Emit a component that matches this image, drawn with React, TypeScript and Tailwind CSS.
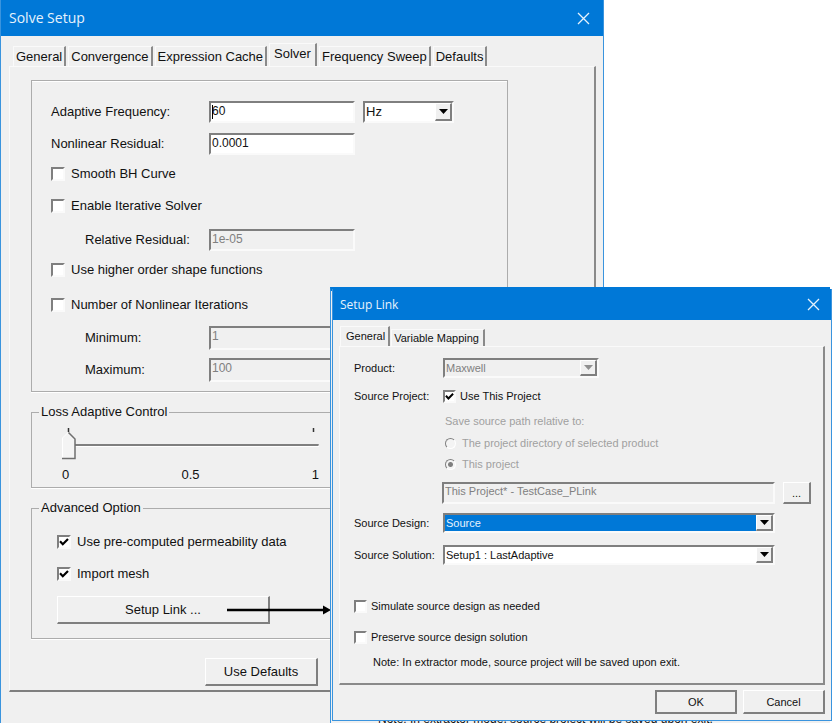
import React from "react";

const sunken =
  "border-2 border-t-[#7f7f7f] border-l-[#7f7f7f] border-r-[#fafafa] border-b-[#fafafa]";
const raised =
  "border-t border-l border-r-2 border-b-2 border-t-white border-l-white border-r-[#7f7f7f] border-b-[#7f7f7f]";

const TitleBar = ({ title, className }: { title: string; className: string }) => (
  <header className={`flex items-center justify-between bg-[#0078d7] text-white ${className}`}>
    <h1 className="font-['Open_Sans',sans-serif] leading-4 text-[#e6f2fc]">{title}</h1>
    <button type="button" aria-label="Close">
      <svg width="13" height="13" viewBox="0 0 13 13" stroke="#e6f2fc" strokeWidth="1.3">
        <path d="M1 1 12 12M12 1 1 12" />
      </svg>
    </button>
  </header>
);

const Tabs = ({
  tabs,
  active,
  small,
}: {
  tabs: string[];
  active: string;
  small?: boolean;
}) => {
  const idleSize = small ? "h-[17px] pl-[2px] pr-1" : "h-5 px-[2px]";
  const activeSize = small ? "h-5 pb-[2px] pl-[5px] pr-[3px]" : "h-[23px] pb-[2px] px-1";

  return (
    <div role="tablist" className={`flex items-end ${small ? "gap-px" : "gap-[2px]"}`}>
      {tabs.map((tab) => (
        <button
          key={tab}
          type="button"
          role="tab"
          aria-selected={tab === active}
          className={`border-t border-l border-t-[#fafafa] border-l-[#fafafa] border-r-2 border-r-[#8a8a8a] whitespace-nowrap ${
            tab === active ? activeSize : idleSize
          }`}
        >
          {tab}
        </button>
      ))}
    </div>
  );
};

const Check = ({
  label,
  checked,
  small,
}: {
  label: string;
  checked?: boolean;
  small?: boolean;
}) => (
  <label className={`flex items-center ${small ? "gap-1" : "gap-[6px]"}`}>
    <span className={`grid shrink-0 bg-white ${sunken} ${small ? "size-[13px]" : "size-[14px]"}`}>
      <input
        type="checkbox"
        defaultChecked={checked}
        className="peer col-start-1 row-start-1 size-full appearance-none"
      />
      <svg
        viewBox="0 0 10 10"
        className="pointer-events-none invisible col-start-1 row-start-1 size-full peer-checked:visible"
        fill="none"
        stroke="#000"
        strokeWidth="2.2"
      >
        <path d="M1 4.2 3.8 7.2 9 2" />
      </svg>
    </span>
    {label}
  </label>
);

const Combo = ({
  id,
  label,
  value,
  className,
  disabled,
  highlight,
}: {
  id: string;
  label?: string;
  value: string;
  className: string;
  disabled?: boolean;
  highlight?: boolean;
}) => (
  <div className={`flex ${sunken} ${disabled ? "" : "bg-white"} ${className}`}>
    <select
      id={id}
      aria-label={label}
      disabled={disabled}
      className={`min-w-0 flex-1 appearance-none pl-px opacity-100 ${
        disabled ? "text-[#808080]" : ""
      } ${highlight ? "bg-[#0078d7] text-[#e6f2fc]" : ""}`}
    >
      <option>{value}</option>
    </select>
    <span className={`flex w-[17px] items-center justify-center bg-[#f0f0f0] ${raised}`}>
      <svg width="9" height="5" viewBox="0 0 9 5" fill={disabled ? "#909090" : "#000"}>
        <path d="M0 0h9L4.500 5z" />
      </svg>
    </span>
  </div>
);

const Field = ({
  id,
  label,
  value,
  disabled,
  indent,
  tall,
  row,
}: {
  id: string;
  label: string;
  value: string;
  disabled?: boolean;
  indent?: boolean;
  tall?: boolean;
  row: string;
}) => (
  <div className={`flex items-center ${row}`}>
    <label htmlFor={id} className={`w-[158px] ${indent ? "pl-[34px]" : ""}`}>
      {label}
    </label>
    <div className="relative flex w-[146px]">
      <input
        id={id}
        defaultValue={value}
        disabled={disabled}
        className={`w-full pl-px text-[12px] leading-4 ${sunken} ${
          tall ? "h-6 pb-[5px]" : "h-[22px] pb-[2px]"
        } ${disabled ? "text-[#808080]" : "bg-white"}`}
      />
      {id === "frequency" && <span className="absolute top-1 left-[3px] h-[14px] w-px bg-black" />}
    </div>
    {id === "frequency" && (
      <Combo id="unit" label="Frequency unit" value="Hz" className="ml-2 h-[22px] w-[91px]" />
    )}
  </div>
);

const Group = ({
  title,
  className,
  children,
}: {
  title: string;
  className: string;
  children: React.ReactNode;
}) => (
  <fieldset className="mt-3 border border-[#acacac] shadow-[0_1px_0_#fff]">
    <legend className="ml-[7px] px-[2px] leading-4">{title}</legend>
    <div className={className}>{children}</div>
  </fieldset>
);

const Row = ({
  label,
  htmlFor,
  className,
  children,
}: {
  label: string;
  htmlFor?: string;
  className: string;
  children: React.ReactNode;
}) => (
  <div className={`flex items-center ${className}`}>
    <label htmlFor={htmlFor} className="w-[89px] shrink-0">
      {label}
    </label>
    {children}
  </div>
);

const SolveSetup = () => (
  <section className="mr-[228px] flex min-h-screen flex-col border-x border-[#3a94de] bg-[#f0f0f0] text-[13px] leading-4">
    <TitleBar title="Solve Setup" className="h-9 pr-[13px] pl-2 text-[14px]" />
    <div className="pt-[7px] pr-[7px] pb-8 pl-2">
      <div className="pl-1">
        <Tabs
          tabs={[
            "General",
            "Convergence",
            "Expression Cache",
            "Solver",
            "Frequency Sweep",
            "Defaults",
          ]}
          active="Solver"
        />
      </div>
      <div className="border-t border-l border-r-2 border-b-2 border-t-[#fafafa] border-l-[#fafafa] border-r-[#8a8a8a] border-b-[#7f7f7f] pt-[13px] pr-[86px] pb-1 pl-[21px]">
        <div className="border border-[#acacac] pt-[15px] pb-px pl-[19px] shadow-[0_1px_0_#fff,inset_0_1px_0_#fff]">
          <Field id="frequency" label="Adaptive Frequency:" value="60" row="h-8" />
          <Field id="residual" label="Nonlinear Residual:" value="0.0001" row="h-8" />
          <div className="flex h-7 items-center">
            <Check label="Smooth BH Curve" />
          </div>
          <div className="flex h-9 items-center">
            <Check label="Enable Iterative Solver" />
          </div>
          <Field id="relative" label="Relative Residual:" value="1e-05" disabled indent row="h-8" />
          <div className="flex h-7 items-center">
            <Check label="Use higher order shape functions" />
          </div>
          <div className="flex h-[42px] items-center">
            <Check label="Number of Nonlinear Iterations" />
          </div>
          <Field id="minimum" label="Minimum:" value="1" disabled indent tall row="h-6" />
          <Field id="maximum" label="Maximum:" value="100" disabled indent tall row="h-10" />
        </div>

        <Group title="Loss Adaptive Control" className="h-[67px] pt-2 pl-[29px]">
          <div className="relative h-8 w-[258px]">
            <input
              type="range"
              aria-label="Loss Adaptive Control"
              min="0"
              max="1"
              step="0.1"
              defaultValue="0"
              className="h-8 w-full appearance-none bg-transparent [&::-webkit-slider-thumb]:h-7 [&::-webkit-slider-thumb]:w-4 [&::-webkit-slider-thumb]:appearance-none"
            />
            <svg
              className="pointer-events-none absolute inset-0"
              width="258"
              height="32"
              viewBox="0 0 258 32"
            >
              <path d="M7.500 0v4M252.500 0v4" stroke="#333" strokeWidth="1.500" />
              <path d="M14 17h244" stroke="#7f7f7f" strokeWidth="2" />
              <path d="M14 18.500h244v-2" stroke="#fff" fill="none" />
              <path d="M1 31V10l6.500-6L14 10v21z" fill="#f4f4f4" />
              <path d="M1.500 30V10l6-6" stroke="#fff" fill="none" />
              <path d="M7.500 4.500 14 11v19.500H1" stroke="#6f6f6f" strokeWidth="1.500" fill="none" />
            </svg>
          </div>
          <div className="mt-[7px] flex w-[258px] justify-between pl-px">
            <span>0</span>
            <span>0.5</span>
            <span>1</span>
          </div>
        </Group>

        <Group title="Advanced Option" className="h-[122px] pt-[10px] pl-[25px]">
          <div className="flex h-8 items-center">
            <Check label="Use pre-computed permeability data" checked />
          </div>
          <div className="flex h-8 items-center">
            <Check label="Import mesh" checked />
          </div>
          <button type="button" className={`mt-[6px] h-7 w-[213px] ${raised}`}>
            Setup Link ...
          </button>
        </Group>

        <button type="button" className={`mt-[19px] ml-[174px] block h-7 w-[113px] ${raised}`}>
          Use Defaults
        </button>
      </div>
    </div>
  </section>
);

const SetupLink = () => (
  <section className="absolute top-[289px] right-0 left-[332px] border border-t-0 border-[#3a94de] bg-[#f0f0f0] text-[11px] leading-[14px]">
    <TitleBar title="Setup Link" className="h-[31px] pr-[11px] pl-[7px] text-[12px]" />
    <div className="p-[6px]">
      <div className="pl-px">
        <Tabs tabs={["General", "Variable Mapping"]} active="General" small />
      </div>
      <div className="border-t border-l border-r-2 border-b-2 border-t-[#fafafa] border-l-[#fafafa] border-r-[#8a8a8a] border-b-[#8a8a8a] pt-[8px] pb-[14px] pl-[14px]">
        <Row label="Product:" htmlFor="product" className="h-[26px]">
          <Combo id="product" value="Maxwell" disabled className="h-5 w-[156px]" />
        </Row>
        <Row label="Source Project:" className="h-[30px]">
          <Check label="Use This Project" checked small />
        </Row>
        <fieldset disabled className="ml-[91px] text-[#a0a0a0]">
          <legend className="h-5 leading-5">Save source path relative to:</legend>
          <label className="flex h-6 items-center gap-[6px]">
            <input
              type="radio"
              name="path"
              className="size-[11px] appearance-none rounded-full border border-t-[#808080] border-l-[#808080] border-r-white border-b-white bg-[#f4f4f4]"
            />
            The project directory of selected product
          </label>
          <label className="flex h-[18px] items-center gap-[6px]">
            <input
              type="radio"
              name="path"
              defaultChecked
              className="size-[11px] appearance-none rounded-full border border-t-[#808080] border-l-[#808080] border-r-white border-b-white bg-[radial-gradient(#808080_2px,#f4f4f4_3px)]"
            />
            This project
          </label>
        </fieldset>
        <div className="mt-[9px] mr-[12px] ml-[88px] flex gap-2">
          <input
            aria-label="Source project path"
            disabled
            defaultValue="This Project* - TestCase_PLink"
            className={`h-[22px] min-w-0 flex-1 pb-1 pl-px text-[#808080] ${sunken}`}
          />
          <button type="button" className={`h-[22px] w-7 ${raised}`}>
            ...
          </button>
        </div>
        <Row label="Source Design:" htmlFor="design" className="mt-[3px] mr-[48px] h-8">
          <Combo id="design" value="Source" highlight className="h-5 flex-1" />
        </Row>
        <Row label="Source Solution:" htmlFor="solution" className="mr-[48px] h-8">
          <Combo id="solution" value="Setup1 : LastAdaptive" className="h-5 flex-1" />
        </Row>
        <div className="mt-[19px] flex h-8 items-center">
          <Check label="Simulate source design as needed" small />
        </div>
        <div className="flex h-[30px] items-center">
          <Check label="Preserve source design solution" small />
        </div>
        <p className="mt-[3px] pl-[19px]">
          Note: In extractor mode, source project will be saved upon exit.
        </p>
      </div>
      <div className="mt-[5px] flex justify-end gap-[6px]">
        <button type="button" className="h-6 w-[82px] border-2 border-[#7f7f7f]">
          OK
        </button>
        <button type="button" className={`h-6 w-[82px] ${raised}`}>
          Cancel
        </button>
      </div>
    </div>
  </section>
);

export default function App() {
  return (
    <main className="relative min-h-screen overflow-hidden bg-white font-['Liberation_Sans',Arial,sans-serif] text-[#111]">
      <SolveSetup />
      <svg
        className="absolute top-[605px] left-[227px]"
        width="104"
        height="10"
        viewBox="0 0 104 10"
      >
        <path d="M0 5h98" stroke="#000" strokeWidth="2.500" />
        <path d="M96 .5 104 5l-8 4.500z" />
      </svg>
      {/* second window peeking out behind the front dialog */}
      <section className="absolute top-[287px] right-[2px] bottom-0 left-[330px] flex flex-col justify-end overflow-hidden border-t-4 border-l border-t-[#0078d7] border-l-[#3a94de] bg-[#f0f0f0] text-[12px] leading-4">
        <p className="-mb-[3px] pl-[47px] whitespace-nowrap">
          Note: In extractor mode, source project will be saved upon exit.
        </p>
      </section>
      <SetupLink />
    </main>
  );
}
